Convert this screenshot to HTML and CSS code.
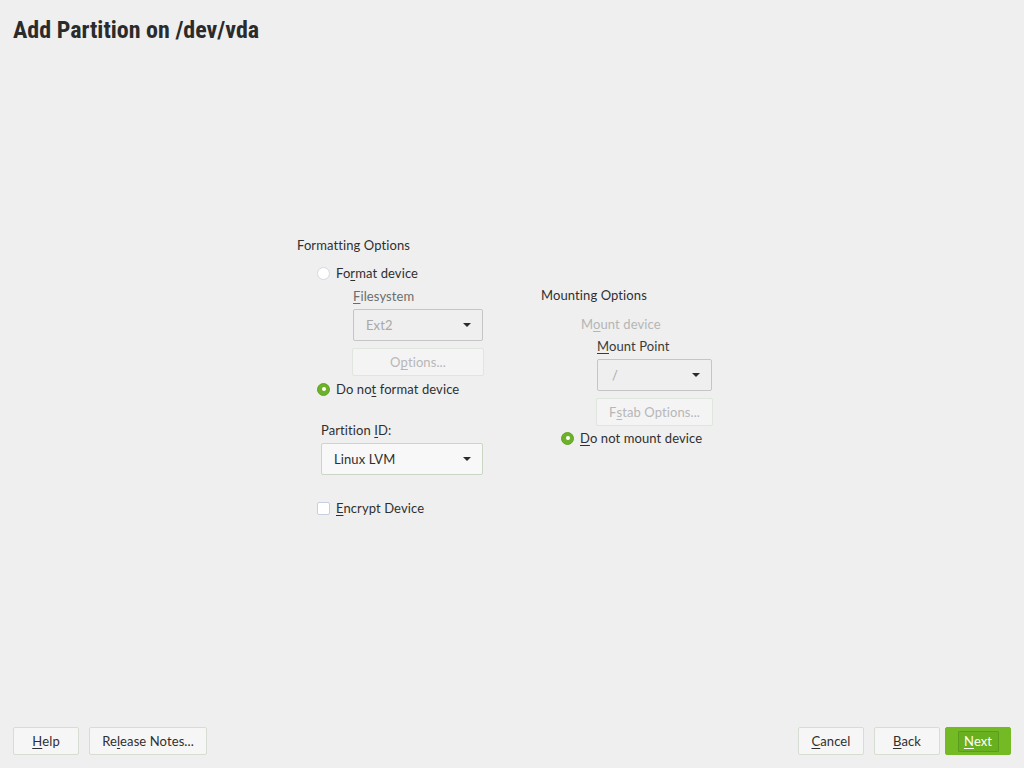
FILE: index.html
```html
<!DOCTYPE html>
<html>
<head>
<meta charset="utf-8">
<link rel="stylesheet" href="styles.css">
</head>
<body>
<div class="screen">
  <h1 class="title">Add Partition on /dev/vda</h1>
  <main class="content">
    <section class="col col-format">
      <div class="group-title">Formatting Options</div>
      <div class="option row-format">
        <span class="radio"></span><span class="label">Fo<u>r</u>mat device</span>
      </div>
      <div class="sub">
        <div class="field-label dim"><u>F</u>ilesystem</div>
        <div class="combo disabled combo-fs"><span>Ext2</span><span class="arrow"></span></div>
        <div class="btn disabled btn-options">O<u>p</u>tions...</div>
      </div>
      <div class="option row-noformat">
        <span class="radio checked"></span><span class="label">Do no<u>t</u> format device</span>
      </div>
      <div class="pid">
        <div class="field-label">Partition <u>I</u>D:</div>
        <div class="combo combo-pid"><span>Linux LVM</span><span class="arrow"></span></div>
      </div>
      <div class="option row-encrypt">
        <span class="check"></span><span class="label"><u>E</u>ncrypt Device</span>
      </div>
    </section>
    <section class="col col-mount">
      <div class="group-title mount-title">Mounting Options</div>
      <div class="mount-device faded">M<u>o</u>unt device</div>
      <div class="sub-mount">
        <div class="field-label mp"><u>M</u>ount Point</div>
        <div class="combo disabled combo-mp"><span>/</span><span class="arrow"></span></div>
        <div class="btn disabled btn-fstab">F<u>s</u>tab Options...</div>
      </div>
      <div class="option row-nomount">
        <span class="radio checked"></span><span class="label"><u>D</u>o not mount device</span>
      </div>
    </section>
  </main>
  <footer class="footer">
    <div class="btn-group">
      <div class="btn btn-help"><u>H</u>elp</div>
      <div class="btn btn-notes">Re<u>l</u>ease Notes...</div>
    </div>
    <div class="btn-group right">
      <div class="btn btn-cancel"><u>C</u>ancel</div>
      <div class="btn btn-back"><u>B</u>ack</div>
      <div class="btn btn-next"><span class="focus"><u>N</u>ext</span></div>
    </div>
  </footer>
</div>
</body>
</html>
```
FILE: styles.css
```css
html, body {
  margin: 0;
  padding: 0;
  background: #efefef;
}
body {
  font-family: "Lato", "Open Sans", sans-serif;
  font-size: 13px;
  letter-spacing: 0.1px;
  color: #2f2f2f;
}
u {
  text-decoration: underline;
  text-underline-offset: 2px;
}
.screen {
  width: 1024px;
  height: 768px;
  display: flex;
  flex-direction: column;
}
.title {
  margin: 14px 0 0 13px;
  font-family: "Roboto", "Liberation Sans", sans-serif;
  font-stretch: condensed;
  font-weight: 700;
  font-size: 24px;
  line-height: 32px;
  color: #2b2b2b;
  letter-spacing: 0;
}
.content {
  flex: 1;
  display: flex;
  padding: 191px 0 0 297px;
}
.col-format {
  width: 244px;
  display: flex;
  flex-direction: column;
}
.col-mount {
  display: flex;
  flex-direction: column;
}
.group-title, .field-label, .label, .mount-device {
  line-height: 16px;
  height: 16px;
  white-space: nowrap;
}
.option {
  display: flex;
  align-items: center;
  height: 16px;
  gap: 6px;
  padding-left: 20px;
}
.row-format { margin-top: 12px; }
.row-noformat { margin-top: 5px; }
.row-encrypt { margin-top: 25px; }
.radio {
  width: 11px;
  height: 11px;
  border-radius: 50%;
  border: 1px solid #d6d9e4;
  background: #ffffff;
  box-sizing: content-box;
  display: flex;
  align-items: center;
  justify-content: center;
}
.radio.checked {
  background: #6db02a;
  border-color: #62a424;
}
.radio.checked::after {
  content: "";
  width: 4px;
  height: 4px;
  border-radius: 50%;
  background: #ffffff;
}
.check {
  width: 11px;
  height: 11px;
  border: 1px solid #c9cfe2;
  border-radius: 2px;
  background: #ffffff;
}
.sub {
  padding-left: 56px;
  display: flex;
  flex-direction: column;
}
.sub .field-label { margin-top: 7px; }
.dim { color: #6d6d6d; }
.faded { color: #b5b5b5; }
.combo {
  margin-top: 5px;
  height: 32px;
  box-sizing: border-box;
  border: 1px solid #c5c5c5;
  border-radius: 2px;
  display: flex;
  align-items: center;
  justify-content: space-between;
  padding: 0 11px 0 12px;
  background: #f8f8f8;
}
.combo.disabled {
  background: #efefef;
  color: #a8a8a8;
}
.combo-fs { width: 130px; }
.combo-pid {
  width: 162px;
  border-color: #c9d7c4;
  color: #2f2f2f;
}
.combo-mp { width: 115px; padding-left: 14px; }
.arrow {
  width: 0;
  height: 0;
  border-left: 4px solid transparent;
  border-right: 4px solid transparent;
  border-top: 4px solid #2a2a2a;
}
.btn {
  height: 28px;
  box-sizing: border-box;
  border: 1px solid #d6ded4;
  border-radius: 2px;
  background: #f6f6f6;
  display: flex;
  align-items: center;
  justify-content: center;
  color: #2f2f2f;
  white-space: nowrap;
}
.btn.disabled {
  color: #b7b7b7;
  background: #f4f4f4;
  border-color: #dfe6dd;
}
.btn-options {
  margin-top: 7px;
  margin-left: -1px;
  width: 132px;
}
.pid {
  padding-left: 24px;
  display: flex;
  flex-direction: column;
  margin-top: 25px;
}
.mount-title { margin-top: 50px; }
.mount-device { margin-top: 13px; padding-left: 40px; }
.sub-mount {
  padding-left: 56px;
  display: flex;
  flex-direction: column;
}
.mp { margin-top: 6px; color: #3a3a3a; }
.btn-fstab {
  margin-top: 7px;
  margin-left: -1px;
  width: 117px;
}
.row-nomount { margin-top: 4px; }
.footer {
  display: flex;
  justify-content: space-between;
  padding: 0 13px 13px 13px;
}
.btn-group {
  display: flex;
  gap: 10px;
}
.btn-help, .btn-cancel, .btn-back { width: 66px; }
.btn-notes { width: 118px; }
.btn-next {
  width: 66px;
  margin-left: -5px;
  background: #73ba25;
  border-color: #73ba25;
  color: #ffffff;
}
.btn-next .focus {
  width: 41px;
  height: 21px;
  box-sizing: border-box;
  border: 1px solid #5a9c1c;
  background: #69b020;
  display: flex;
  align-items: center;
  justify-content: center;
  border-radius: 1px;
}
```
